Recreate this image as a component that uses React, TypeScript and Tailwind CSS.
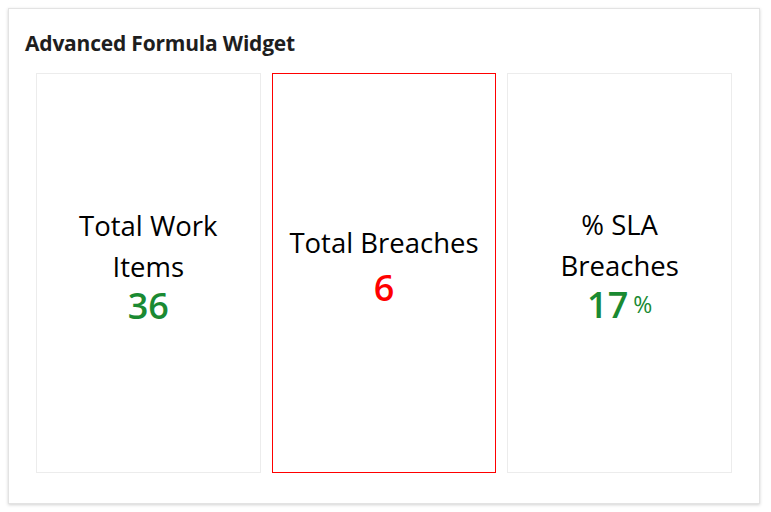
export default function App() {
  const green = "text-[#1a8a32]";

  return (
    <div className="p-2 font-['Open_Sans',sans-serif]">
      <div className="w-[752px] h-[496px] border border-[#e3e3e3] bg-white shadow-[0_1px_3px_rgba(0,0,0,0.18)] px-[27px] pt-[20px]">
        <h1 className="-ml-[11px] text-[21px] leading-[28px] font-bold text-[#1e1e1e] tracking-[-0.2px]">
          Advanced Formula Widget
        </h1>

        <div className="mt-[16px] grid grid-cols-3 gap-[11px]">
          {/* Total Work Items */}
          <div className="h-[400px] pb-[16px] border border-[#ececec] flex flex-col items-center justify-center text-center">
            <div className="text-[27.5px] leading-[41px] text-black px-8">Total Work Items</div>
            <div className={`text-[36px] leading-[38px] font-semibold ${green}`}>36</div>
          </div>

          {/* Total Breaches */}
          <div className="h-[400px] pb-[12px] border border-[#ff0000] flex flex-col items-center justify-center text-center">
            <div className="text-[27.5px] leading-[41px] text-black">Total Breaches</div>
            <div className="text-[36px] leading-[50px] font-semibold text-[#ff0000]">6</div>
          </div>

          {/* % SLA Breaches */}
          <div className="h-[400px] pb-[12px] border border-[#ececec] flex flex-col items-center justify-center text-center">
            <div className="text-[27.5px] leading-[41px] text-black px-12">% SLA Breaches</div>
            <div className={`leading-[38px] ${green}`}>
              <span className="text-[36px] font-semibold">17</span>
              <span className="ml-[5px] text-[23px] relative -top-[5px]">%</span>
            </div>
          </div>
        </div>
      </div>
    </div>
  );
}
